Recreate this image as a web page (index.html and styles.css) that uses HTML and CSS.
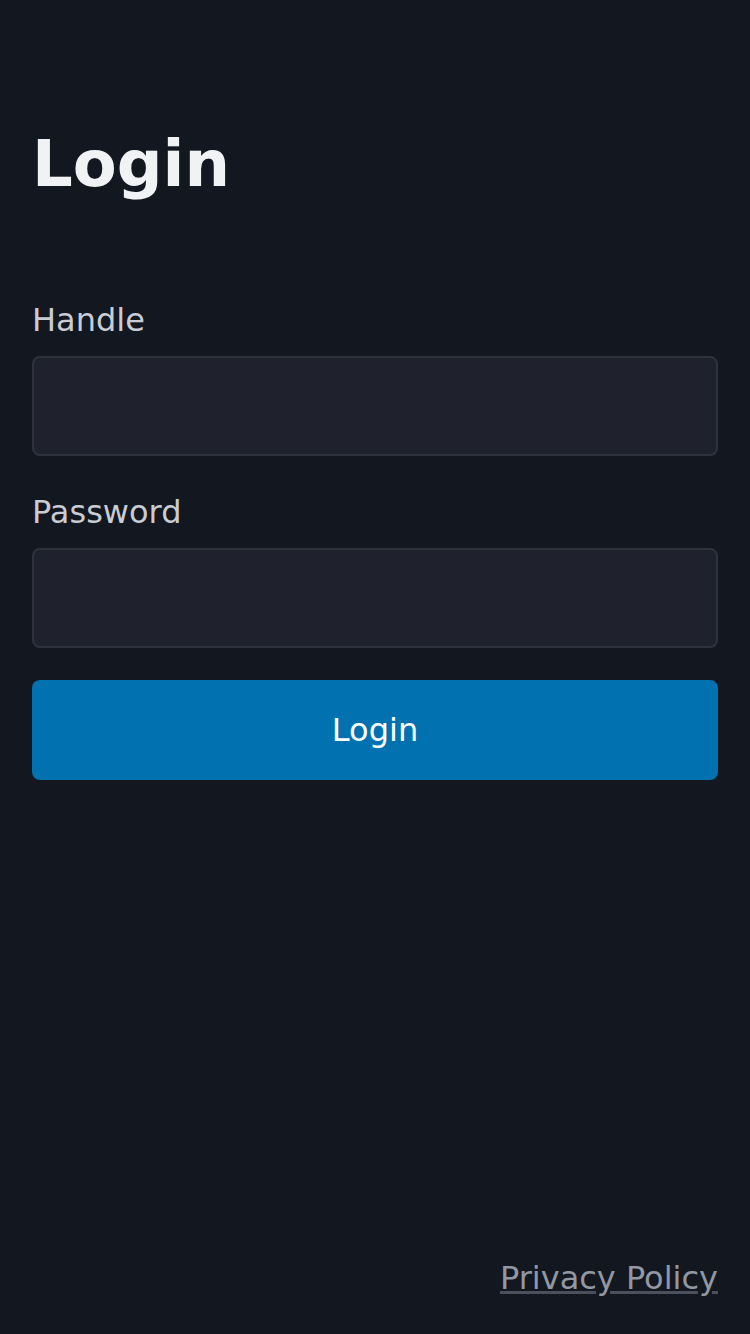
FILE: index.html
```html
<!DOCTYPE html>
<html lang="en">
<head>
<meta charset="utf-8">
<title>Login</title>
<link rel="stylesheet" href="styles.css">
</head>
<body>
<div class="page">
  <main class="main">
    <h1 class="title">Login</h1>
    <form class="form">
      <label class="field">
        <span class="label">Handle</span>
        <input class="input" type="text">
      </label>
      <label class="field">
        <span class="label">Password</span>
        <input class="input" type="password">
      </label>
      <button class="button" type="button">Login</button>
    </form>
  </main>
  <footer class="footer">
    <a class="link" href="#">Privacy Policy</a>
  </footer>
</div>
</body>
</html>
```
FILE: styles.css
```css
html, body {
  margin: 0;
  padding: 0;
  background: #13171f;
}
* { box-sizing: border-box; }
body {
  font-family: "DejaVu Sans", sans-serif;
  color: #c9ccd3;
}
.page {
  min-height: 1334px;
  display: flex;
  flex-direction: column;
  padding: 124px 32px 32px;
}
.main { flex: 1; }
.title {
  margin: 0;
  font-size: 64px;
  line-height: 80px;
  font-weight: bold;
  color: #f1f2f4;
}
.form {
  margin-top: 92px;
  display: flex;
  flex-direction: column;
}
.field {
  display: flex;
  flex-direction: column;
  margin-bottom: 32px;
}
.label {
  font-size: 32px;
  line-height: 48px;
  color: #c9ccd3;
  margin-bottom: 12px;
}
.input {
  height: 100px;
  width: 100%;
  background: #1f222c;
  border: 2px solid #2e323d;
  border-radius: 8px;
  font-family: inherit;
  font-size: 32px;
  color: #f1f2f4;
  padding: 0 24px;
  outline: none;
}
.button {
  height: 100px;
  width: 100%;
  border: none;
  border-radius: 8px;
  background: #0171b0;
  color: #ffffff;
  font-family: inherit;
  font-size: 32px;
  cursor: pointer;
}
.footer {
  display: flex;
  justify-content: flex-end;
}
.link {
  font-size: 32px;
  line-height: 48px;
  color: #9197a3;
  text-decoration: underline;
  text-decoration-color: #4b505c;
}
```
